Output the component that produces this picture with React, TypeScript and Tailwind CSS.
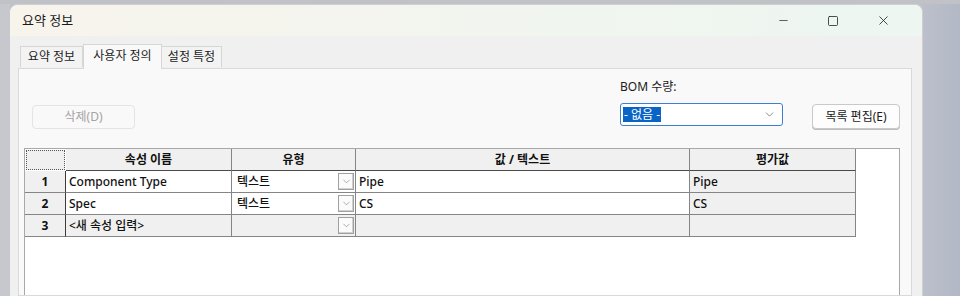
import { ChevronDown, Minus, Square, X } from "lucide-react";

const font = { fontFamily: '"Noto Sans", "Noto Sans CJK KR", sans-serif' };

const cols = "grid grid-cols-[41px_166px_124px_334px_166px]";
const cell = "h-[22px] border-r border-b border-[#858585] text-[12px] leading-[21px] text-[#111] truncate";

function TypeCell({ value, gray }: { value?: string; gray?: boolean }) {
  return (
    <div className={`${cell} flex items-center justify-between pl-[5px] pr-[1px] ${gray ? "bg-[#f0f0f0]" : "bg-white"}`}>
      <span className="self-start font-medium">{value}</span>
      <span className="flex h-[17px] w-[16px] items-center justify-center border border-[#a0a0a0] bg-[#fbfbfb] shadow-[inset_-1px_-1px_0_#d0d0d0]">
        <ChevronDown className="h-[11px] w-[11px] text-[#8a8a8a]" strokeWidth={1.5} />
      </span>
    </div>
  );
}

function Row({ n, name, type, value, evaluated, last }: { n: string; name: string; type?: string; value?: string; evaluated?: string; last?: boolean }) {
  return (
    <div className={cols}>
      <div className={`${cell} bg-[#f0f0f0] text-center font-bold border-r-[#3c3c3c]`}>{n}</div>
      <div className={`${cell} pl-[3px] font-medium ${last ? "bg-[#f0f0f0]" : "bg-white"}`}>{name}</div>
      <TypeCell value={type} gray={last} />
      <div className={`${cell} pl-[3px] font-medium ${last ? "bg-[#f0f0f0]" : "bg-white"}`}>{value}</div>
      <div className={`${cell} pl-[3px] font-medium bg-[#f0f0f0]`}>{evaluated}</div>
    </div>
  );
}

export default function App() {
  return (
    <div style={font} className="flex h-[296px] w-[960px] overflow-hidden bg-[#c0c2c8] pt-[4px]">
      <div className="w-[10px] shrink-0 bg-[#c6c8cd]" />
      <div className="flex w-[913px] shrink-0 flex-col overflow-hidden rounded-t-[8px] border-t border-r border-[#cfcfcf] bg-[#f0f0f0]">
        <div className="flex h-[31px] shrink-0 items-center bg-gradient-to-r from-[#f7f4ec] to-[#edf6f1]">
          <span className="ml-[12px] text-[13px] text-[#1b1b1b]">요약 정보</span>
          <div className="ml-auto flex items-center">
            <span className="flex w-[50px] justify-center"><Minus className="h-[13px] w-[13px] text-[#222]" strokeWidth={1.3} /></span>
            <span className="flex w-[50px] justify-center"><Square className="h-[12px] w-[12px] text-[#222]" strokeWidth={1.6} /></span>
            <span className="mr-[14px] flex w-[50px] justify-center"><X className="h-[15px] w-[15px] text-[#222]" strokeWidth={1.3} /></span>
          </div>
        </div>
        <div className="flex h-[32px] shrink-0 items-end pl-[10px] text-[12px] text-[#1b1b1b]">
          <div className="mb-[1px] flex h-[21px] w-[63px] items-center justify-center border border-b-0 border-[#d6d6d6] bg-[#f3f3f3]">요약 정보</div>
          <div className="relative top-[1px] flex h-[25px] w-[79px] items-start justify-center border border-b-0 border-[#d6d6d6] bg-[#f9f9f9] pt-[2px]">사용자 정의</div>
          <div className="mb-[1px] flex h-[21px] w-[60px] items-center justify-center border border-b-0 border-l-0 border-[#d6d6d6] bg-[#f3f3f3]">설정 특정</div>
        </div>
        <div className="ml-[8px] mr-[10px] min-h-0 flex-1 overflow-hidden border border-[#d9d9d9] bg-[#f9f9f9]">
          <div className="mt-[10px] flex items-end">
            <button className="ml-[13px] h-[24px] w-[103px] rounded-[4px] border border-[#e4e4e4] bg-[#f9f9f9] text-[12px] text-[#a3a3a3]">삭제(D)</button>
            <div className="ml-[485px] flex w-[163px] flex-col">
              <span className="text-[12px] leading-[16px] text-[#1b1b1b]">BOM 수량:</span>
              <div className="mb-[3px] mt-[8px] flex h-[23px] items-center justify-between rounded-[3px] border border-[#3d7fd6] bg-white pl-[2px] pr-[6px]">
                <span className="bg-[#0a64c8] px-[1px] text-[12px] leading-[15px] text-white">- 없음 -</span>
                <ChevronDown className="h-[13px] w-[13px] text-[#666]" strokeWidth={1.4} />
              </div>
            </div>
            <button className="ml-[29px] h-[25px] w-[88px] rounded-[4px] border border-[#c9c9c9] bg-[#fdfdfd] text-[12px] text-[#1b1b1b] shadow-[0_1px_0_#bdbdbd]">목록 편집(E)</button>
          </div>
          <div className="ml-[5px] mt-[19px] h-[200px] w-[876px] border border-[#a8a8a8] bg-white">
            <div className={cols}>
              <div className="m-[1px] h-[20px] border border-dotted border-[#555] bg-[#f0f0f0]" />
              {["속성 이름", "유형", "값 / 텍스트", "평가값"].map((h) => (
                <div key={h} className={`${cell} border-b-[#4a4a4a] bg-[#f0f0f0] text-center font-bold`}>{h}</div>
              ))}
            </div>
            <Row n="1" name="Component Type" type="텍스트" value="Pipe" evaluated="Pipe" />
            <Row n="2" name="Spec" type="텍스트" value="CS" evaluated="CS" />
            <Row n="3" name="<새 속성 입력>" last />
          </div>
        </div>
      </div>
      <div className="flex-1 bg-gradient-to-r from-[#bcc0cb] to-[#b3b8c6]" />
    </div>
  );
}
